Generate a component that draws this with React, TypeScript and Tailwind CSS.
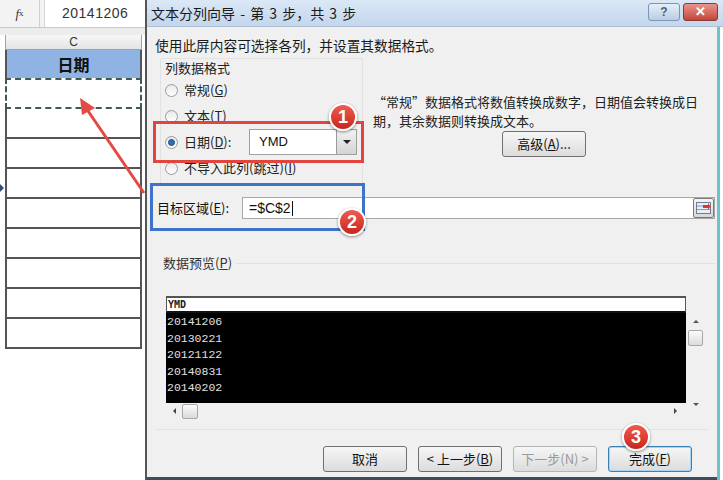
import * as React from 'react';

const previewRows = ['20141206', '20130221', '20121122', '20140831', '20140202'];

const Radio = ({ checked, label, className }: { checked?: boolean; label: React.ReactNode; className?: string }) => (
  <div className={`flex items-center gap-[6px] ${className ?? ''}`}>
    <span className="w-[13px] h-[13px] rounded-full border border-[#9a9a9a] bg-gradient-to-b from-[#e9e9e9] to-[#ffffff] flex items-center justify-center">
      {checked && <span className="w-[7px] h-[7px] rounded-full bg-[#2a6fb7] border border-[#1b4f88]" />}
    </span>
    <span className="text-[13px] text-[#222]">{label}</span>
  </div>
);

const Badge = ({ n, className }: { n: string; className: string }) => (
  <div
    className={`absolute w-[28px] h-[28px] rounded-full bg-gradient-to-b from-[#f05a4f] to-[#c8241b] border-2 border-white shadow-[0_1px_3px_rgba(0,0,0,0.45)] flex items-center justify-center text-white text-[18px] font-bold font-['Liberation_Sans',sans-serif] ${className}`}
  >
    {n}
  </div>
);

const WinButton = ({ children, disabled, primary }: { children: React.ReactNode; disabled?: boolean; primary?: boolean }) => (
  <div
    className={`w-[84px] h-[26px] rounded-[3px] border flex items-center justify-center text-[13px] bg-gradient-to-b from-[#f6f6f6] to-[#dcdcdc] ${
      disabled ? 'border-[#b5b5b5] text-[#9a9a9a]' : primary ? 'border-[#3c7fb1] text-[#111] shadow-[inset_0_0_0_1px_#a6d4f2]' : 'border-[#707070] text-[#111]'
    }`}
  >
    {children}
  </div>
);

export default function App() {
  return (
    <div className="relative w-[723px] h-[480px] overflow-hidden bg-white flex font-['Noto_Sans_CJK_SC',sans-serif]">
      {/* Excel sheet on the left */}
      <div className="w-[145px] flex flex-col shrink-0">
        <div className="h-[28px] flex border-b border-[#c8c8c8] bg-[#f3f3f3]">
          <div className="w-[40px] flex items-center justify-center border-r border-[#d0d0d0] font-['Liberation_Serif',serif] italic text-[13px] text-[#333]">
            f<span className="text-[9px] not-italic">x</span>
          </div>
          <div className="flex-1 ml-[4px] bg-white border-l border-[#d6d6d6] flex items-center pl-[17px] text-[14px] text-[#333] font-['Liberation_Sans',sans-serif] tracking-[0.5px]">
            20141206
          </div>
        </div>
        <div className="h-[7px] bg-[#ececec]" />
        <div className="flex flex-col pl-[5px] flex-1 bg-white">
          <div className="w-[137px] h-[15px] border-x border-b border-[#9aa3ad] bg-gradient-to-b from-[#f7f7f7] to-[#e4e4e4] flex items-center justify-center text-[12px] text-[#333] font-['Liberation_Sans',sans-serif]">
            C
          </div>
          <div className="w-[137px] h-[28px] bg-[#8fb4e3] border-x-2 border-[#555] flex items-center justify-center text-[16px] font-bold text-[#111]">
            日期
          </div>
          <div className="w-[137px] h-[31px] border-2 border-dashed border-[#3d5a55]" />
          {Array.from({ length: 8 }).map((_, i) => (
            <div key={i} className="w-[137px] h-[30px] border-x-2 border-b-2 border-[#555]" />
          ))}
        </div>
      </div>

      {/* Dialog */}
      <div className="relative flex-1 flex flex-col border-l-2 border-[#555] bg-white">
        {/* title bar */}
        <div className="h-[27px] bg-gradient-to-b from-[#dbe8f6] to-[#c3d6ec] border-b border-[#aebfd4] flex items-center pl-[4px] pr-[5px]">
          <span className="text-[14px] text-[#1a1a1a] [word-spacing:2px]">文本分列向导 - 第 3 步，共 3 步</span>
          <div className="ml-auto flex gap-[3px] self-start mt-[3px]">
            <div className="w-[32px] h-[18px] rounded-[3px] border border-[#7d95b3] bg-gradient-to-b from-[#e6eef8] to-[#b9cde5] flex items-center justify-center text-[12px] font-bold text-[#4c5e76] font-['Liberation_Sans',sans-serif]">
              ?
            </div>
            <div className="w-[35px] h-[18px] rounded-[3px] border border-[#8a3a33] bg-gradient-to-b from-[#e8948b] to-[#c4433a] flex items-center justify-center text-[13px] font-bold text-white font-['Liberation_Sans',sans-serif]">
              ✕
            </div>
          </div>
        </div>

        <div className="flex-1 flex flex-col bg-[#f0f0f0] border-r-[3px] border-[#6cc3c8] mr-[3px]">
          <div className="pl-[8px] pt-[9px] h-[31px] text-[13.7px] leading-[18px] text-[#1a1a1a]">
            使用此屏内容可选择各列，并设置其数据格式。
          </div>

          {/* format group + description */}
          <div className="flex">
            <div className="ml-[13px] w-[203px] h-[127px] border border-[#e2e2e2] rounded-[2px] flex flex-col pl-[4px]">
              <div className="h-[18px] text-[13px] leading-[18px] text-[#222]">列数据格式</div>
              <div className="h-[26px] flex items-center">
                <Radio label={<>常规(<u>G</u>)</>} />
              </div>
              <div className="h-[26px] flex items-center">
                <Radio label={<>文本(<u>T</u>)</>} />
              </div>
              <div className="h-[26px] flex items-center">
                <Radio checked className="w-[84px]" label={<>日期(<u>D</u>):</>} />
                <div className="w-[108px] h-[26px] bg-white border border-[#a0a0a0] flex items-center">
                  <span className="flex-1 pl-[9px] text-[13px] text-[#111] font-['Liberation_Sans',sans-serif]">YMD</span>
                  <div className="w-[20px] h-[24px] bg-gradient-to-b from-[#f2f2f2] to-[#d4d4d4] border-l border-[#9a9a9a] flex items-center justify-center">
                    <span className="w-0 h-0 border-x-[4px] border-x-transparent border-t-[4px] border-t-[#222]" />
                  </div>
                </div>
              </div>
              <div className="h-[26px] flex items-center">
                <Radio label={<>不导入此列(跳过)(<u>I</u>)</>} />
              </div>
            </div>
            <div className="ml-[10px] flex flex-col pt-[34px]">
              <div className="h-[19px] text-[13px] leading-[19px] text-[#222]">“常规”数据格式将数值转换成数字，日期值会转换成日</div>
              <div className="h-[19px] text-[13px] leading-[19px] text-[#222]">期，其余数据则转换成文本。</div>
              <div className="ml-[129px] mt-[1px] w-[84px] h-[26px] rounded-[3px] border border-[#707070] bg-gradient-to-b from-[#f6f6f6] to-[#dcdcdc] flex items-center justify-center text-[13px] text-[#111]">
                高级(<u>A</u>)...
              </div>
            </div>
          </div>

          {/* target range */}
          <div className="mt-[12px] h-[22px] flex items-center">
            <span className="ml-[10px] w-[85px] text-[13px] text-[#111]">目标区域(<u>E</u>):</span>
            <div className="flex-1 mr-[2px] h-[22px] bg-white border border-[#a8a8a8] flex items-center">
              <span className="flex-1 pl-[6px] text-[14px] text-[#111] font-['Liberation_Sans',sans-serif]">
                =$C$2<span className="inline-block w-[1px] h-[15px] bg-[#111] align-middle ml-[1px]" />
              </span>
              <div className="w-[21px] h-[20px] border border-[#7a7a7a] rounded-[2px] bg-gradient-to-b from-[#f4f4f4] to-[#d8d8d8] flex items-center justify-center">
                <svg width="15" height="12" viewBox="0 0 15 12">
                  <rect x="0.5" y="0.5" width="14" height="11" fill="#e8eef7" stroke="#6b7f99" />
                  <line x1="1" y1="4" x2="14" y2="4" stroke="#7d9bc4" />
                  <line x1="1" y1="7.5" x2="14" y2="7.5" stroke="#7d9bc4" />
                  <path d="M7 3 L12 3 L12 1 L14.5 4.5 L12 8 L12 6 L7 6 Z" fill="#d43a2b" />
                </svg>
              </div>
            </div>
          </div>

          {/* preview */}
          <div className="mt-[36px] h-[16px] flex items-center">
            <span className="ml-[16px] text-[13px] leading-[16px] text-[#333]">数据预览(<u>P</u>)</span>
            <div className="flex-1 ml-[4px] mr-[2px] h-px bg-[#e0e0e0]" />
          </div>
          <div className="mt-[25px] ml-[19px] flex">
            <div className="flex flex-col w-[520px]">
              <div className="h-[17px] bg-white border-t-2 border-x border-[#555] border-b-2 border-b-[#111] flex items-center pl-[1px] text-[10px] font-bold text-[#222] font-['DejaVu_Sans_Mono',monospace]">
                YMD
              </div>
              <div className="h-[90px] bg-black pt-[1px] flex flex-col">
                {previewRows.map((r) => (
                  <div key={r} className="h-[16.5px] leading-[16.5px] pl-[1px] text-[11.5px] text-[#e0e0e0] font-['Liberation_Mono',monospace]">
                    {r}
                  </div>
                ))}
              </div>
              <div className="h-[16px] flex items-center">
                <span className="ml-[7px] w-0 h-0 border-y-[3px] border-y-transparent border-r-[3px] border-r-[#444]" />
                <div className="ml-[6px] w-[16px] h-[15px] rounded-[2px] border border-[#a8a8a8] bg-gradient-to-b from-[#fbfbfb] to-[#dadada]" />
                <span className="ml-auto mr-[9px] w-0 h-0 border-y-[3px] border-y-transparent border-l-[3px] border-l-[#444]" />
              </div>
            </div>
            <div className="w-[19px] h-[107px] mt-[17px] flex flex-col items-center">
              <span className="mt-[7px] w-0 h-0 border-x-[3px] border-x-transparent border-b-[3px] border-b-[#555]" />
              <div className="mt-[7px] w-[15px] h-[16px] rounded-[2px] border border-[#a8a8a8] bg-gradient-to-b from-[#fbfbfb] to-[#dcdcdc]" />
              <span className="mt-auto mb-[14px] w-0 h-0 border-x-[3px] border-x-transparent border-t-[3px] border-t-[#555]" />
            </div>
          </div>

          {/* buttons */}
          <div className="mt-[9px] mx-[8px] h-px bg-[#e4e4e4]" />
          <div className="mt-[16px] flex gap-[11px] pl-[176px]">
            <WinButton>取消</WinButton>
            <WinButton>&lt; 上一步(<u>B</u>)</WinButton>
            <WinButton disabled>下一步(N) &gt;</WinButton>
            <WinButton primary>完成(<u>F</u>)</WinButton>
          </div>
          <div className="mt-auto h-[3px] bg-[#3d4c5c]" />
        </div>
      </div>

      {/* annotations */}
      <div className="absolute left-[153px] top-[121px] w-[211px] h-[42px] border-[3px] border-[#e0453e]" />
      <div className="absolute left-[150px] top-[183px] w-[215px] h-[48px] border-[3px] border-[#3f73c9]" />
      <Badge n="1" className="left-[329px] top-[103px]" />
      <Badge n="2" className="left-[338px] top-[208px]" />
      <Badge n="3" className="left-[622px] top-[423px]" />
      <svg className="absolute left-0 top-0 pointer-events-none" width="723" height="480">
        <polygon points="0,184 4,188 0,192" fill="#2f4f7a" />
        <line x1="144" y1="193" x2="86" y2="108" stroke="#e24a43" strokeWidth="3" />
        <polygon points="80,98 95,108 82,115" fill="#e24a43" />
      </svg>
    </div>
  );
}
